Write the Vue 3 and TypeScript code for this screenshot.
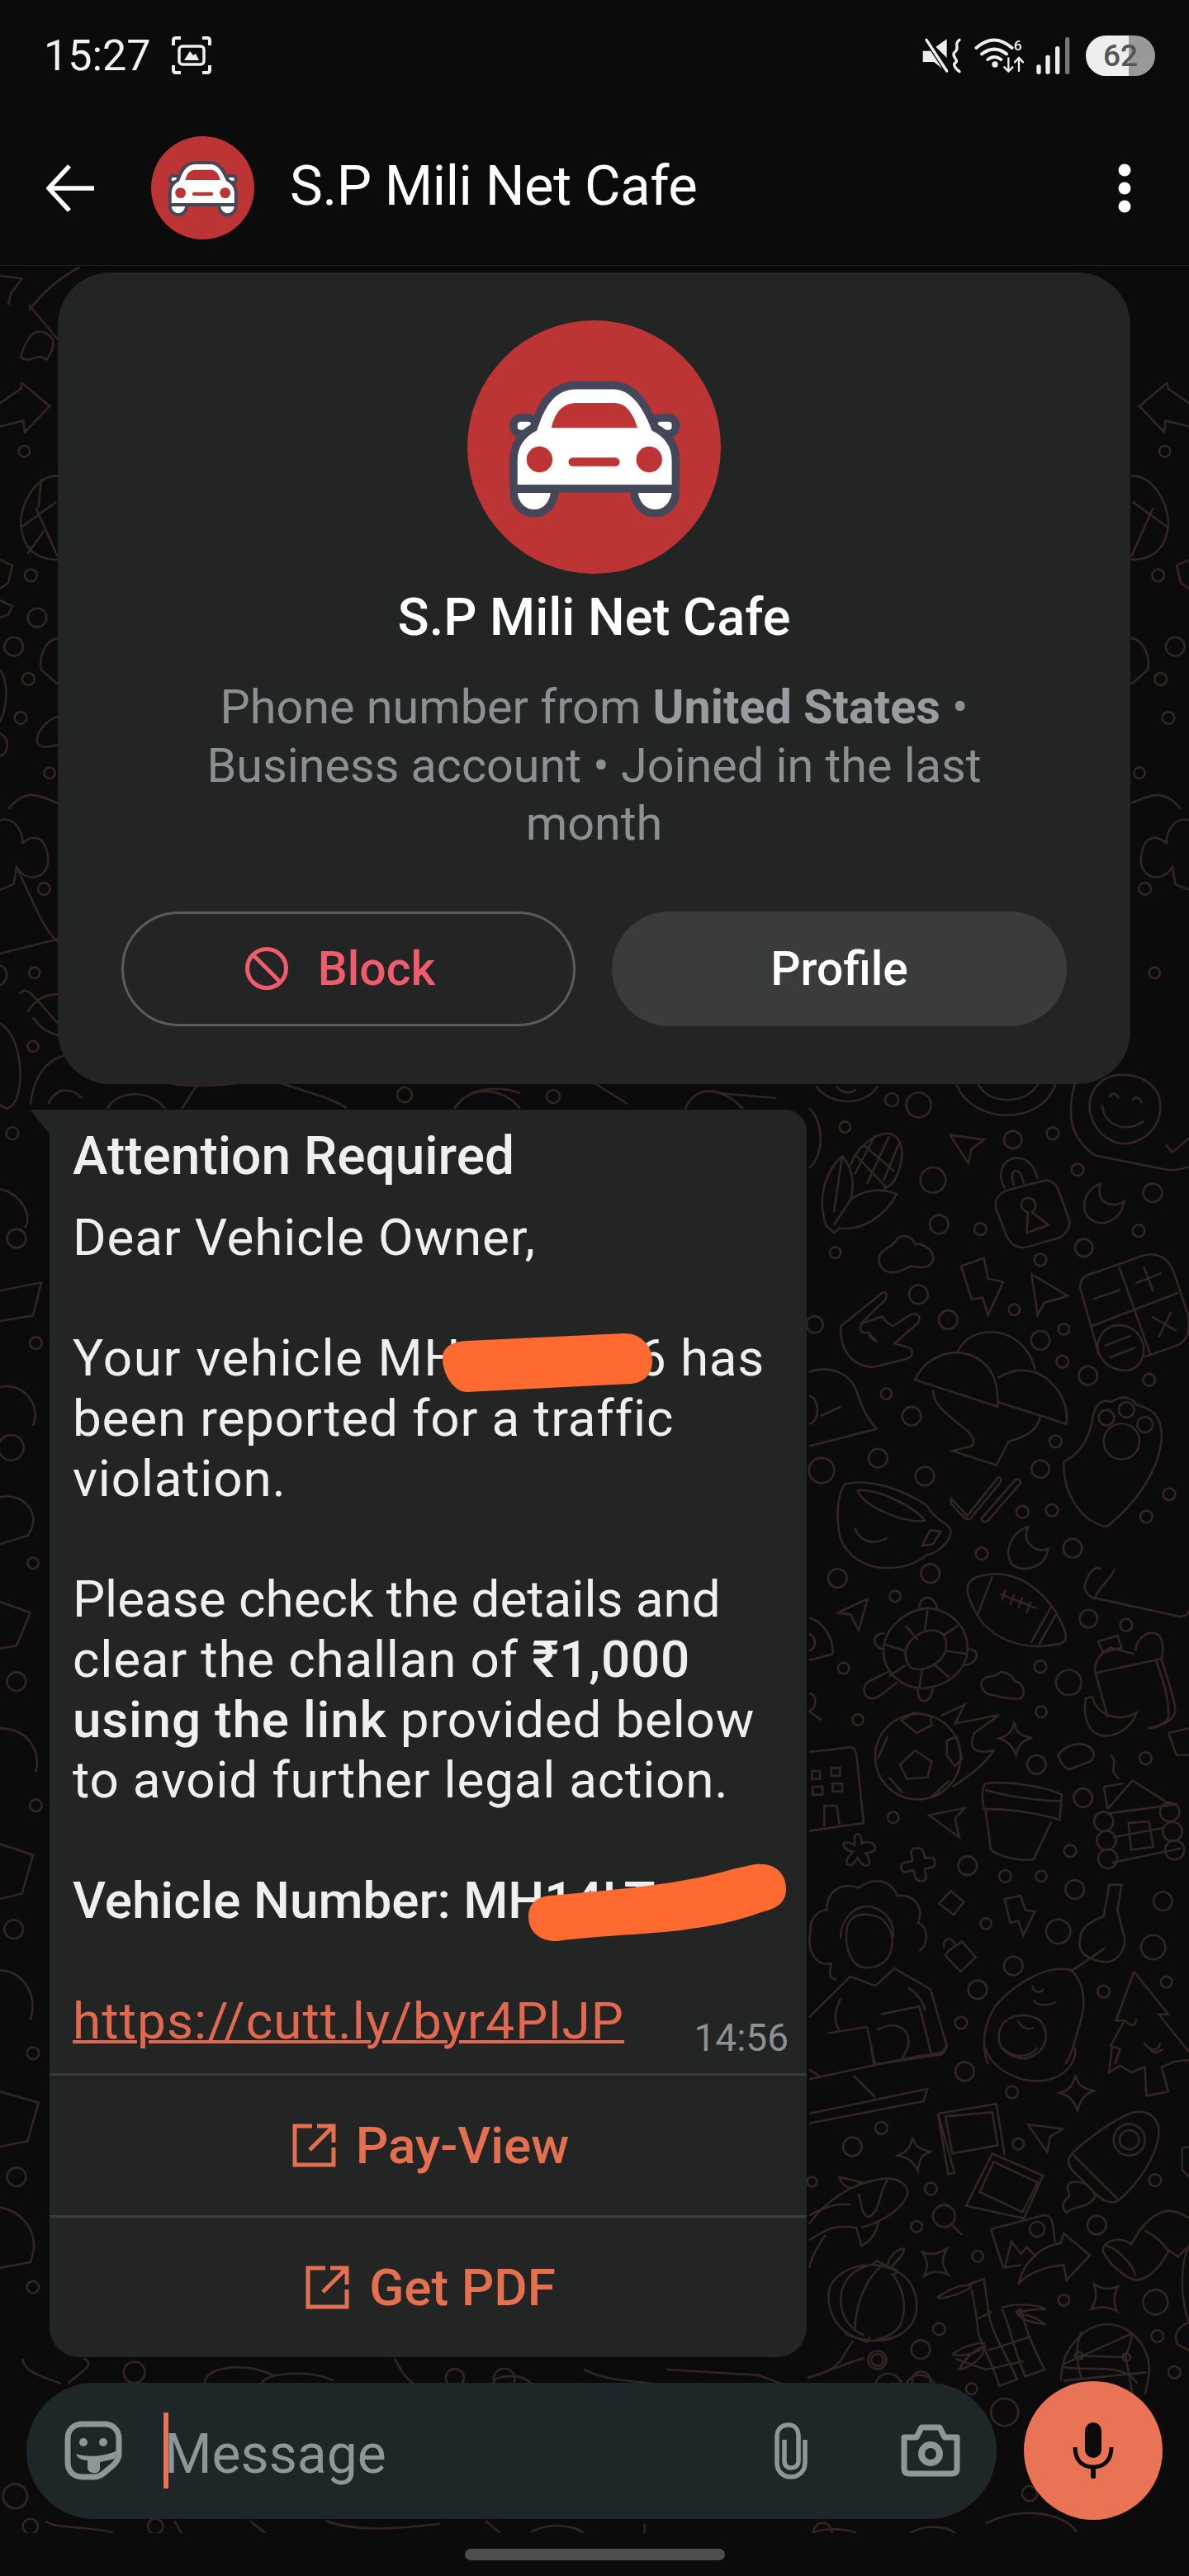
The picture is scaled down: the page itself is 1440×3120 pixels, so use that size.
<script setup lang="ts">
/**
 * Chat screen with an unknown business sender and the doodle wallpaper
 */

interface DoodleGroup {
  x: number
  y: number
  sx: number
  sy: number
  paths: string[]
  dots: [number, number, number][]
}

// each group is traced in the coordinates of its own crop, then scaled back to the page
const doodles: DoodleGroup[] = [
  {
    x: 980, y: 1300, sx: 1 / 3, sy: 1 / 2.613,
    dots: [[398,100,45],[130,170,20],[740,210,32],[885,190,22],[450,338,46],[975,305,22],[1248,378,34],[472,478,34],[622,493,22],[1197,498,22],[95,567,20],[840,590,22],[998,552,32],[397,700,34],[505,780,34],[745,748,20],[925,810,20],[840,845,34],[920,912,22],[20,795,30],[1013,957,34],[1235,970,22],[280,1014,20],[372,1085,34],[895,1165,22],[250,1218,34],[45,1257,46],[420,1275,34],[840,1252,32],[1308,1332,22],[775,1388,22],[882,1383,22],[1225,1403,22],[957,1503,34],[627,1520,22],[1080,1090,28],[1153,1065,28],[1220,1112,28],[1135,1165,65]],
    paths: [
      'M60 480 L90 505 L110 490 C190 500 280 450 318 382 C260 360 190 370 150 400 C170 340 150 290 120 262 C70 300 25 380 60 480Z',
      'M150 290 C170 240 230 190 290 190 C340 200 350 260 320 320 C310 345 290 360 270 365 M165 255 L280 360 M195 225 L310 310 M240 195 L165 320 M290 200 L210 350 M325 225 L270 340 M120 262 L90 440 M150 400 L90 480',
      'M512 195 L635 210 L590 240 L578 285Z',
      'M680 430 C670 400 690 380 720 370 L850 340 C880 335 900 350 910 380 L945 465 C950 490 930 510 910 520 L790 550 C750 555 730 540 715 510Z',
      'M712 365 C680 320 700 270 755 268 C800 268 820 300 830 335 M745 355 C730 320 740 305 755 310 C765 310 775 330 780 350',
      'M795 440 C760 430 765 395 795 395 C825 395 830 425 810 440 L870 480 L790 505Z',
      'M1058 350 C1000 365 980 430 1020 460 C1060 490 1130 470 1145 405 C1110 425 1040 420 1058 350Z',
      'M300 630 C260 630 240 590 265 565 C280 550 300 550 310 535 C330 505 370 510 385 540 C420 540 455 560 450 590 C440 620 400 615 370 610 C340 625 320 630 300 630Z',
      'M552 610 L635 585 L650 650 L705 660 L650 765 L630 710 L590 715Z',
      'M808 635 L940 705 L855 725 L830 765Z',
      'M985 680 C980 650 1010 635 1040 630 L1220 575 C1270 565 1310 590 1325 630 L1375 760 C1385 810 1380 840 1340 860 L1210 900 M1125 610 L1240 890 M1025 800 L1340 695 M1030 715 L1130 685 M1185 665 L1280 632 M1215 610 L1250 690 M1245 770 L1335 815 M1315 755 L1270 835 M985 680 L1040 850 C1055 920 1100 940 1150 940 C1190 940 1220 910 1215 860 C1200 810 1150 790 1100 800 C1060 815 1040 850 1050 890 M1075 862 L1170 830 M1090 900 L1185 868',
      'M115 800 C110 870 150 925 230 930 L350 905 C385 895 380 870 350 865 L310 855 L395 790 C410 765 390 755 365 765 L305 800 L285 790 L265 770 L195 790 C175 810 190 825 215 820 L245 850 L215 830 M115 800 L265 695 C290 685 285 715 260 730 L190 790',
      'M385 970 C420 900 510 870 580 890 C650 910 690 960 685 1055Z M540 880 C580 810 690 800 760 850 C800 880 815 910 820 940 M685 965 C740 930 830 930 880 980 C925 1020 940 1060 935 1110 L685 1040',
      'M450 1000 C450 1040 480 1065 530 1100 C590 1140 610 1160 590 1180 L520 1195 L680 1240 L725 1165 C790 1150 830 1130 840 1085',
      'M925 1230 C990 1200 1020 1150 1030 1090 C1040 1040 1070 1030 1100 1040 C1130 1020 1170 1020 1190 1050 C1240 1060 1285 1080 1280 1160 C1270 1260 1180 1370 1080 1435 C990 1420 920 1330 925 1230Z',
      'M130 1300 C220 1280 350 1320 430 1370 C460 1420 510 1420 515 1450 C510 1490 460 1520 425 1525 C380 1560 300 1575 230 1560 C150 1540 105 1490 105 1420 C100 1370 110 1320 130 1300Z',
      'M175 1320 C240 1310 380 1370 420 1415 C380 1430 200 1380 175 1320Z M165 1440 C190 1490 240 1490 285 1470 M440 1445 L478 1450 L450 1490 L410 1495Z',
      'M515 1345 L575 1400 L685 1280 C700 1275 700 1290 690 1300 L585 1410 C570 1420 540 1385 515 1360Z M630 1405 L750 1285 C765 1280 775 1295 760 1305 L650 1415 C630 1425 620 1415 630 1405Z',
      'M795 1435 C730 1450 700 1530 745 1560 C790 1580 860 1560 868 1505 C830 1520 770 1490 795 1435Z',
      'M1145 5 C1060 0 1010 60 1020 120 C1040 200 1120 240 1190 215 C1260 190 1290 130 1270 70 C1250 30 1200 5 1145 5Z M1065 100 C1070 170 1160 190 1215 150 M1090 75 C1100 60 1115 60 1125 80 M1175 85 C1185 70 1200 75 1210 95',
      'M970 20 C930 130 950 210 1040 260 L1300 305 C1340 310 1380 295 1380 295 M1295 225 L1320 250 L1380 205',
      'M25 40 C70 100 200 110 250 40 M100 40 C110 60 150 70 170 50 M535 35 C590 160 840 170 895 35 M615 35 C650 100 790 100 830 35 M0 110 C50 150 60 250 0 300',
      'M0 945 C60 925 140 940 170 1000 C190 1050 200 1080 245 1125 L0 1180 M0 1020 C40 1030 40 1100 0 1110 M40 1085 L115 1055',
    ],
  },
  {
    x: 980, y: 1900, sx: 1 / 3, sy: 1 / 2.613,
    dots: [[103,30,34],[440,15,34],[312,87,20],[1015,158,32],[1152,178,22],[125,315,20],[840,310,22],[943,360,46],[177,478,20],[843,453,20],[826,620,34],[1222,600,22],[305,787,20],[995,725,34],[575,940,34],[948,893,22],[712,973,22],[843,973,20],[965,1015,34],[1285,1052,34],[642,1123,20],[905,1148,44],[1250,1198,44],[742,1257,34],[612,1332,34],[1070,1338,22],[1298,1308,20],[552,1437,22],[395,595,155],[1070,800,35],[1080,860,35],[1085,918,35],[1310,770,35],[1320,832,35],[1328,890,35]],
    paths: [
      'M103 140 L212 95 L180 195 L150 145Z',
      'M270 260 C270 190 350 130 430 125 C520 130 580 190 575 260 C570 320 510 370 420 378 C340 380 270 330 270 260Z',
      'M350 270 C350 230 400 195 450 195 C490 195 505 225 495 260 C480 300 430 320 395 318 C365 320 350 295 350 270Z',
      'M350 180 L395 225 M430 130 L420 195 M540 180 L490 210 M495 260 L575 270 M450 300 L510 345 M410 320 L400 378 M350 305 L290 340 M350 260 L275 240',
      'M275 205 C230 200 220 250 275 255 M400 125 C400 80 460 80 465 130 M575 255 C620 250 625 300 560 305 M290 325 L210 360 C180 395 220 430 260 400 L320 360 M395 380 C390 430 440 435 450 378',
      'M575 70 C570 40 600 25 640 20 C760 0 880 80 930 200 C940 230 920 240 890 240 C770 260 650 220 600 130 C585 100 575 85 575 70Z',
      'M665 25 L610 150 M880 120 L805 235 M900 140 L835 240 M695 80 L825 125 M715 65 L700 100 M745 80 L730 115 M775 90 L760 125 M805 105 L790 140',
      'M670 400 C630 400 610 360 640 345 C660 340 680 340 690 330 C710 320 740 340 745 355 C775 360 790 390 770 410 C740 415 710 410 670 400Z',
      'M1040 330 L1280 285 C1300 350 1330 410 1330 450 C1325 480 1290 495 1240 505 M1260 290 C1280 340 1310 410 1305 470 C1300 490 1260 500 1230 505 M1040 330 C1030 290 1070 260 1095 250 L1180 270 M1050 230 L1120 212 L1135 250 L1068 265Z M1040 330 L1085 470',
      'M1185 260 C1190 215 1240 190 1270 210 C1290 230 1285 265 1280 285',
      'M1005 410 L1030 405 C1040 460 1120 490 1190 455 C1170 510 1090 545 1040 520 C1005 500 995 450 1005 410Z',
      'M330 620 L385 575 L445 610 L430 660 L355 665Z M335 480 L390 520 L445 495 L440 465 L380 455Z M500 545 L535 530 L555 600 L530 625 L500 590Z M250 600 L285 530 M290 660 L340 710 M440 725 L510 670',
      'M480 465 L565 430 L530 490 L690 463 L600 520 C580 560 590 590 670 575 C630 630 570 660 520 690',
      'M745 485 C750 520 770 530 810 535 C770 545 760 560 752 590 C740 560 720 545 690 537 C720 530 740 515 745 485Z',
      'M905 590 C930 555 1000 540 1030 575 C1040 590 1030 605 1020 610 L945 635 C925 630 910 610 905 590Z',
      'M1305 520 L1380 505 M1305 520 L1335 590 L1380 590 M1000 60 C1010 10 1040 -10 1060 0 M1000 60 C1010 85 1025 95 1050 95 L1340 150 C1370 155 1380 140 1380 130 M1040 90 C1050 60 1100 30 1110 0',
      'M0 580 L150 565 C165 565 170 580 172 590 L198 805 L0 830 M10 640 H40 V665 H10Z M80 630 H112 V655 H80Z M12 690 H48 V715 H12Z M85 680 H120 V705 H85Z M55 815 V750 H100 L110 810',
      'M0 155 C60 170 90 230 85 270 L0 290 M0 205 C25 215 30 250 0 260 M0 395 C30 395 30 440 0 450 L45 480',
      'M435 780 L565 758 L530 790 L545 850Z',
      'M640 680 C720 670 860 690 918 715 L910 795 C820 770 710 760 635 760 C625 720 630 690 640 680Z M640 700 C720 720 830 735 915 735 M640 760 L660 890 C700 915 770 925 815 920 L880 800',
      'M1085 760 L1175 670 L1310 745 M1070 690 L1140 680 M1070 690 L1085 760 M1080 775 L1340 745 M1105 850 L1290 820 M1100 930 L1350 885 M1160 805 L1235 800 L1250 880 L1170 890Z M1095 590 C1130 620 1080 630 1125 665',
      'M165 845 C175 835 195 840 190 870 C210 860 240 865 240 885 C235 900 215 900 205 900 C220 915 225 940 205 940 C190 940 185 925 175 915 C165 935 145 945 135 930 C135 915 150 905 160 895 C140 895 125 885 125 870 C135 860 155 870 165 875Z',
      'M370 895 C375 880 410 880 415 895 L420 915 L450 915 C460 925 460 945 445 945 L420 950 L425 980 C415 995 390 990 385 975 L380 955 L345 960 C330 955 330 935 345 930 L375 925Z',
      'M515 1020 L562 1055 L525 1095 L472 1060Z',
      'M710 1045 L768 1035 L785 1080 L820 1085 L778 1160 L760 1115 L730 1120Z',
      'M505 1210 L555 1180 L605 1230 L550 1275 L495 1225Z M490 1200 C480 1170 520 1160 530 1190',
      'M1090 1000 L1135 1000 L1120 1080 L1140 1150 C1160 1190 1130 1240 1080 1245 C1020 1240 970 1220 985 1170 C985 1130 1040 1110 1070 1100Z',
      'M950 1270 C860 1250 740 1320 680 1380 C640 1430 620 1500 650 1568 M950 1270 C1000 1310 1010 1370 980 1450 C960 1510 950 1545 930 1568 M950 1275 L1060 1210 M975 1260 L1075 1200',
      'M690 1470 C700 1410 790 1400 840 1430 C880 1480 860 1530 790 1550 C730 1550 680 1520 690 1470Z M810 1320 C820 1350 850 1340 850 1330 M815 1365 C830 1390 890 1380 895 1370 M760 1430 C770 1460 810 1460 815 1450',
      'M1180 1275 L1305 1410 L1270 1410 L1380 1530 M1180 1275 L1115 1430 L1145 1430 L1095 1510 L1130 1520 L1110 1568 M1150 1430 C1165 1450 1185 1450 1190 1425 M1215 1500 C1240 1530 1270 1530 1275 1500',
      'M100 1300 C60 1300 80 1260 80 1250 C20 1260 -10 1200 5 1150 C0 1100 40 1080 65 1080 C60 1020 120 990 180 1010 C240 970 300 990 320 1035 C380 1030 420 1070 395 1120 C440 1140 430 1190 400 1210',
      'M135 1150 C140 1100 180 1090 220 1095 C280 1100 310 1150 300 1200 C290 1250 240 1265 200 1262 C160 1260 130 1210 135 1150Z M115 1170 C110 1120 160 1060 225 1070 C280 1080 310 1120 305 1165',
      'M0 1420 L150 1290 L240 1320 L310 1265 L440 1330 L500 1510 C495 1530 480 1540 460 1540 L240 1568 M210 1450 L70 1470 M210 1450 L240 1568 M260 1410 L400 1385 L445 1540 M245 1460 C310 1430 370 1450 360 1510 L340 1550 M115 1360 C90 1400 90 1440 110 1460 M360 1325 C400 1350 420 1380 420 1400',
    ],
  },
  {
    x: 980, y: 2480, sx: 1 / 3, sy: 1 / 3,
    dots: [[565,87,34],[737,162,22],[262,292,22],[157,360,34],[760,350,20],[1257,482,22],[442,513,22],[390,650,20],[1045,645,34],[612,758,20],[925,918,20],[1258,925,45],[472,1023,22],[405,1097,34],[248,1135,22],[1265,1048,22],[1327,1180,22],[590,1240,20],[10,487,18],[1163,335,57],[1163,335,35],[490,612,40],[828,660,27],[980,1120,14],[1152,1125,14]],
    paths: [
      'M640 0 C660 70 750 130 850 120 C930 110 975 50 965 0 M700 0 C740 40 800 40 830 0',
      'M1100 0 L1090 90 L1130 65 L1170 90 L1220 70 L1225 175 L1305 160 L1280 70 L1330 50 L1380 45 M1240 10 C1250 20 1270 20 1285 5',
      'M968 100 C975 135 995 150 1035 157 C1000 170 985 190 975 228 C960 190 945 175 910 165 C945 155 960 135 968 100Z',
      'M0 115 L230 65 L400 30 C460 25 490 20 495 0 M225 0 L235 60 M160 100 L240 180 M0 240 L430 150 L415 195 L0 275 M0 80 L40 105',
      'M375 325 C385 360 400 370 445 378 C410 385 400 405 395 448 C375 410 360 400 322 392 C355 380 370 360 375 325Z',
      'M468 240 L680 205 L710 390 M528 455 L505 460 L468 240Z M495 250 L665 235 L685 355 L520 385Z',
      'M665 385 L850 465 L780 620 L570 575Z M670 415 L830 490 L775 598 L620 525Z',
      'M795 280 L920 295 L875 325 L865 380Z',
      'M945 400 C960 370 1100 260 1180 235 C1240 225 1275 260 1270 320 C1260 400 1190 500 1125 555 C1100 570 1070 560 1040 530 L960 450 C940 430 940 410 945 400Z M960 390 L1125 555',
      'M1040 540 C1020 500 990 480 950 490 C925 510 950 530 945 540 C920 560 915 580 935 600 C960 570 1010 590 1040 540Z',
      'M0 640 C60 560 150 490 280 475 C340 475 365 510 355 540 C330 590 270 630 190 655 M110 470 L190 490 L160 510 C130 510 115 490 110 470Z M285 480 C250 530 260 600 215 615 C190 610 190 570 180 530 M170 650 L190 720 C230 700 250 660 250 630 M0 610 C50 580 100 565 150 570 M0 700 C60 660 100 640 170 655 M0 800 C10 760 30 720 60 680',
      'M520 645 L555 680',
      'M408 740 C440 760 470 750 500 730 C480 770 480 790 505 825 C470 810 450 810 418 830 C435 795 430 770 408 740Z',
      'M660 660 L850 610 C870 605 880 620 885 640 L893 710 M705 800 L660 660 M710 800 L735 705 L770 750 L790 725 L825 760 M705 800 L770 790',
      'M760 860 C780 770 850 720 915 710 L925 675 L1020 755 L935 845 L925 790 C860 795 790 820 760 860Z',
      'M1065 735 C1080 690 1140 690 1170 715 C1190 680 1220 620 1290 595 C1320 590 1350 600 1380 620 M1065 735 C1090 790 1150 840 1190 845 C1240 840 1280 790 1305 740 C1280 700 1250 680 1220 665 M1080 720 C1120 730 1180 790 1185 830 M1305 735 L1340 760 L1380 720',
      'M1035 860 C1070 880 1090 880 1122 868 C1105 900 1105 925 1118 958 C1085 940 1060 940 1025 950 C1045 920 1045 895 1035 860Z',
      'M70 900 C70 840 140 785 240 790 C340 800 395 860 390 950 C385 1020 320 1065 240 1065 C130 1065 70 990 70 900Z M240 785 C150 800 110 860 115 930 C120 990 160 1030 200 1045 M260 795 C210 840 170 920 165 1030 M300 820 C340 870 360 940 330 1010 C310 1040 270 1060 240 1060 M235 785 L245 775 L320 810 L310 825 M285 790 C290 760 320 730 345 730 C345 750 320 775 300 795 M130 1040 L210 1070 L220 1050 M160 1065 L130 1110 C110 1160 50 1190 0 1195',
      'M465 910 C500 880 550 860 590 865 M470 912 C520 905 560 890 590 870 M580 860 L635 840 L655 980 C670 1050 720 1120 755 1205 L690 1230 C680 1180 640 1110 615 1040 C610 990 600 930 590 880 M612 985 L665 960 M700 950 C730 1010 730 1060 785 1195 L855 1170 C820 1100 790 1040 770 950 L750 960 M650 1100 L805 1050 M700 945 C760 925 830 935 860 950 C810 950 780 960 750 960 M755 965 C790 970 830 980 855 1005 C810 1000 770 990 755 965Z M520 1115 C560 1085 610 1070 640 1075 M545 1170 C570 1120 610 1090 640 1085 C630 1130 590 1160 545 1170Z M520 1115 C560 1125 610 1110 640 1085',
      'M915 1210 C915 1090 1000 1010 1080 1005 C1170 1005 1240 1090 1235 1180 C1232 1210 1225 1240 1220 1260 M990 1030 C970 1080 965 1130 990 1200 M1170 1040 C1180 1060 1150 1110 1150 1125 L1175 1260 M925 1150 L1170 1040 M925 1210 L1225 1180 M980 1120 L1150 1125',
      'M240 1220 C260 1170 320 1175 335 1220 M355 1220 C370 1180 430 1180 455 1220',
      'M1380 360 L1355 365 V445 L1380 470 M1380 720 C1350 780 1345 900 1380 1000 C1340 1010 1320 1050 1340 1080 L1380 1100',
    ],
  },
  {
    x: 0, y: 320, sx: 1 / 3, sy: 1 / 1.425,
    dots: [[88,323,20],[112,537,22],[135,610,34],[50,660,34],[103,716,22],[75,783,22],[180,878,20],[160,1078,22],[125,1223,20],[120,1350,20],[45,1500,22]],
    paths: [
      'M0 240 L75 215 L80 205 L180 245 L90 290 L85 270 L0 280 M75 160 C100 120 130 110 170 120 C210 130 190 150 170 165 C130 150 110 175 75 160Z',
      'M105 80 C170 40 230 20 290 5 M105 70 L210 130 M0 20 L80 25 L40 50 L30 70',
      'M210 365 C130 365 80 410 75 445 C80 490 130 510 210 510 M75 455 L205 410 M130 420 L210 505 M150 370 L140 420 M160 460 L100 500',
      'M210 645 C160 650 140 680 150 700 L210 725 M210 780 C160 790 130 810 135 825 C150 840 190 830 210 830 M0 510 L45 520 L30 550 L0 560 M0 580 L45 590 L30 605 L0 610',
      'M30 940 C100 900 150 920 210 930 M0 960 C60 950 90 990 80 1000 C130 980 170 990 175 1030 C170 1060 100 1070 60 1040 L50 1070 L0 1080 M60 1040 C120 1100 160 1150 210 1170 M0 1190 L210 1165',
      'M70 1260 C100 1240 130 1270 210 1310 M100 1290 C130 1270 160 1260 210 1260 M120 1300 C160 1330 230 1340 290 1320 M0 1310 C70 1330 90 1400 60 1440 C40 1460 20 1460 0 1450 M110 1450 C130 1380 210 1360 290 1365 M175 1450 C200 1420 260 1420 300 1440',
      'M0 700 C30 720 30 760 0 790 M0 810 C30 815 40 840 0 850 M0 1210 C30 1215 35 1235 0 1245',
    ],
  },
  {
    // right of the profile card
    x: 1440, y: 320, sx: -1 / 3, sy: 1 / 1.425,
    dots: [[88,323,20],[112,537,22],[50,660,34],[103,716,22],[75,783,22],[180,878,20],[160,1078,22],[125,1223,20]],
    paths: [
      'M0 240 L75 215 L80 205 L180 245 L90 290 L85 270 L0 280',
      'M210 365 C130 365 80 410 75 445 C80 490 130 510 210 510 M75 455 L205 410 M130 420 L210 505',
      'M210 645 C160 650 140 680 150 700 L210 725 M0 510 L45 520 L30 550 L0 560',
      'M30 940 C100 900 150 920 210 930 M0 960 C60 950 90 990 80 1000 C130 980 170 990 175 1030 C170 1060 100 1070 60 1040 L50 1070 L0 1080',
    ],
  },
  {
    // left of the bubble
    x: 0, y: 1420, sx: 1 / 3, sy: 1 / 3,
    dots: [[60,240,34],[130,620,22],[40,1000,46],[120,1420,20],[60,1850,34],[130,2300,22],[50,2750,34],[120,3200,22],[60,3650,34],[120,4050,22]],
    paths: [
      'M0 60 C80 80 120 160 90 200 M0 430 L150 400 L120 520 L0 540 M0 780 C90 760 150 850 120 920 M0 1180 C80 1160 160 1240 100 1320 L0 1350',
      'M0 1560 L110 1600 L60 1720 L0 1730 M0 2020 C100 2020 150 2100 130 2180 M0 2440 L120 2480 L80 2620 L0 2640 M0 2900 C90 2900 140 3000 110 3080',
      'M0 3340 L140 3380 L100 3520 L0 3540 M0 3760 C90 3780 150 3860 110 3960 L0 3980',
    ],
  },
  {
    // strips above the bubble and round the composer
    x: 0, y: 2840, sx: 1 / 1.089, sy: 1 / 3,
    dots: [[177,100,14],[600,120,12],[1157,55,12],[1215,130,12],[1325,245,18],[1358,540,10],[20,550,16],[205,660,10],[1085,680,12],[40,660,10],[665,125,14]],
    paths: [
      'M30 50 C30 100 60 120 80 140 M110 50 C130 70 100 110 90 140 M270 140 C270 80 320 60 360 110 M345 140 C350 100 410 90 440 130 M520 50 C530 90 530 110 545 140 M650 140 C650 110 690 100 700 140',
      'M770 90 C800 130 830 130 860 140 M880 90 L1000 110 L1030 140 M1065 120 C1100 90 1130 50 1140 50 M1260 50 L1300 90 L1350 60 M1400 80 C1440 100 1480 60 1500 140',
      'M60 640 C70 670 130 660 150 685 M230 640 L240 685 M330 640 L350 685 M430 640 C470 680 520 670 580 650 M640 640 L660 685 M700 680 C730 640 760 660 770 685 M850 650 V685 M1070 685 C1090 660 1120 670 1130 685 M1200 685 C1220 650 1250 660 1260 685 M1300 650 C1340 590 1400 600 1420 680',
    ],
  },
  {
    x: 70, y: 1312, sx: 1, sy: 1,
    dots: [[420,14,9],[1010,20,8],[600,16,8]],
    paths: [
      'M60 31 C70 10 110 5 130 31 M170 0 L150 31 M270 0 C300 10 340 20 350 31 M480 31 C500 0 540 5 560 31 M650 0 L690 25 M760 31 C770 5 800 0 830 31',
      'M120 -2 C150 4 190 4 230 -2 M500 12 C520 5 540 5 560 12 M800 12 L870 18',
    ],
  },
]

function groupTransform(group: DoodleGroup) {
  return `translate(${group.x} ${group.y}) scale(${group.sx} ${group.sy})`
}
</script>

<template>
  <div class="phone">
    <header class="topbar">
      <div class="status">
        <div class="status__left">
          <span class="status__time">15:27</span>
          <svg class="status__shot" width="50" height="48" viewBox="0 0 50 48" fill="none" stroke="#eee" stroke-width="4">
            <path d="M3 12 V6 C3 4 4 3 6 3 H12 M38 3 H44 C46 3 47 4 47 6 V12 M47 36 V42 C47 44 46 45 44 45 H38 M12 45 H6 C4 45 3 44 3 42 V36" />
            <rect x="10" y="13" width="30" height="22" rx="4" stroke-width="3.5" />
            <path d="M16 30 L23 19 L27 24 L30 22 L34 30Z" fill="#eee" stroke="none" />
          </svg>
        </div>
        <div class="status__right">
          <svg width="50" height="45" viewBox="120 75 150 135">
            <path d="M125 125 H155 L212 185 V202 L165 165 H125Z M172 110 L212 82 V150Z" fill="#eee" />
            <path d="M138 85 L212 198" stroke="#0b0b0b" stroke-width="18" />
            <path d="M138 85 L212 198" stroke="#eee" stroke-width="10" stroke-linecap="round" />
            <path d="M258 85 C235 100 262 115 240 130 C225 145 262 160 240 170 C235 180 250 195 258 200" fill="none" stroke="#eee" stroke-width="10" stroke-linecap="round" />
          </svg>
          <svg width="62" height="50" viewBox="300 70 186 150" fill="none" stroke="#eee" stroke-width="12" stroke-linecap="round">
            <path d="M310 118 C355 80 395 80 440 118 M330 140 C360 118 392 118 420 140 M352 160 C368 148 384 148 400 160" />
            <circle cx="378" cy="178" r="11" fill="#eee" stroke="none" />
            <path d="M427 155 V202 M412 188 L427 204 L442 188 M465 202 V155 M450 170 L465 154 L480 170" stroke-width="7" />
            <text x="446" y="128" class="status__six">6</text>
          </svg>
          <svg width="44" height="46" viewBox="526 72 132 138">
            <rect x="530" y="175" width="16" height="35" rx="8" fill="#eee" />
            <rect x="563" y="140" width="16" height="70" rx="8" fill="#eee" />
            <rect x="598" y="108" width="16" height="102" rx="8" fill="#eee" />
            <rect x="634" y="75" width="16" height="135" rx="8" fill="#777" />
          </svg>
          <div class="battery">62</div>
        </div>
      </div>
      <div class="appbar">
        <svg width="58" height="58" viewBox="0 0 58 58" fill="none" stroke="#fff" stroke-width="5.5">
          <path d="M58 29 H6 M28 2 L3 29 L28 56" />
        </svg>
        <svg class="appbar__avatar" width="125" height="125" viewBox="198 82 920 920"><use href="#car" /></svg>
        <span class="appbar__title">S.P Mili Net Cafe</span>
        <svg class="appbar__menu" width="16" height="60" viewBox="0 0 16 60" fill="#fff">
          <circle cx="8" cy="8" r="7.5" />
          <circle cx="8" cy="30" r="7.5" />
          <circle cx="8" cy="52" r="7.5" />
        </svg>
      </div>
    </header>

    <main class="chat">
      <svg class="wallpaper" width="1440" height="2746" viewBox="0 322 1440 2746" fill="none" stroke="#332523" stroke-width="2.6">
        <g v-for="(group, i) in doodles" :key="i" :transform="groupTransform(group)">
          <path v-for="(d, j) in group.paths" :key="j" :d="d" vector-effect="non-scaling-stroke" />
          <ellipse v-for="(dot, j) in group.dots" :key="'d' + j" :cx="dot[0]" :cy="dot[1]" :rx="dot[2]"
            :ry="dot[2] * Math.abs(group.sx / group.sy)" vector-effect="non-scaling-stroke" />
        </g>
      </svg>

      <section class="card">
        <svg class="card__avatar" width="307" height="307" viewBox="198 82 920 920">
          <defs>
            <g id="car">
              <circle cx="658" cy="542" r="460" fill="#bc3434" />
              <g stroke="#44465a" stroke-width="58" paint-order="stroke" stroke-linejoin="round" fill="#fff">
                <rect x="380" y="450" width="50" height="30" rx="12" />
                <rect x="888" y="450" width="52" height="30" rx="12" />
                <path d="M380 708 H500 C496 745 470 768 440 768 C410 768 384 745 380 708Z" />
                <path d="M818 708 H940 C935 745 910 768 880 768 C850 768 822 745 818 708Z" />
                <path d="M380 678 V590 C380 540 405 505 450 482 C475 410 505 335 590 332 H730 C800 335 840 410 868 482 C915 505 940 540 940 590 V678Z" />
              </g>
              <path d="M503 472 C515 420 540 385 590 382 H735 C775 385 800 420 815 472Z" fill="#bc3434" />
              <circle cx="460" cy="587" r="47" fill="#bc3434" />
              <circle cx="858" cy="587" r="47" fill="#bc3434" />
              <rect x="565" y="580" width="186" height="32" rx="16" fill="#bc3434" />
            </g>
          </defs>
          <use href="#car" />
        </svg>
        <h1 class="card__name">S.P Mili Net Cafe</h1>
        <p class="card__desc">
          Phone number from <b>United States</b> •<br />
          Business account • Joined in the last<br />
          month
        </p>
        <div class="card__actions">
          <button class="pill pill--block">
            <svg width="52" height="52" viewBox="0 0 52 52" fill="none" stroke="currentColor" stroke-width="5">
              <circle cx="26" cy="26" r="23.5" />
              <path d="M10 10 L42 42" />
            </svg>
            Block
          </button>
          <button class="pill pill--profile">Profile</button>
        </div>
      </section>

      <article class="bubble">
        <div class="bubble__body">
          <h2 class="bubble__title">Attention Required</h2>
          <p>Dear Vehicle Owner,</p>
          <p><span class="plate-lead">Your vehicle MH</span><span class="hidden-gap"></span>6 has<br />been reported for a traffic<br />violation.</p>
          <p><span class="tight">Please check the details and</span><br />clear the challan of <b>₹1,000<br />using the link</b> provided below<br />to avoid further legal action.</p>
          <p><b class="tight">Vehicle Number: MH14LT</b></p>
          <div class="bubble__foot">
            <a class="bubble__link">https://cutt.ly/byr4PlJP</a>
            <span class="bubble__time">14:56</span>
          </div>
        </div>
        <button class="bubble__action">
          <svg width="53" height="53" viewBox="0 0 53 53" fill="none" stroke="currentColor" stroke-width="5">
            <path d="M24 3 H3 V50 H50 V29 M30 3 H50 V23 M50 3 L21 32" />
          </svg>
          Pay-View
        </button>
        <button class="bubble__action">
          <svg width="53" height="53" viewBox="0 0 53 53" fill="none" stroke="currentColor" stroke-width="5">
            <path d="M24 3 H3 V50 H50 V29 M30 3 H50 V23 M50 3 L21 32" />
          </svg>
          Get PDF
        </button>
      </article>

      <div class="composer">
        <div class="composer__bar">
          <svg class="composer__sticker" width="70" height="72" viewBox="0 0 70 72" fill="none" stroke="#8d9699" stroke-width="7">
            <path d="M22 4 H48 C59 4 66 11 66 22 V40 C66 46 63 50 59 54 L47 64 C43 67 40 68 36 68 H22 C11 68 4 61 4 50 V22 C4 11 11 4 22 4Z" />
            <circle cx="23" cy="26" r="5" fill="#8d9699" stroke="none" />
            <circle cx="47" cy="26" r="5" fill="#8d9699" stroke="none" />
            <path d="M14 40 C28 45 50 43 64 36 L61 46 L43 50 V58 C43 65 30 65 28 58 V48 C22 48 16 46 14 40Z" fill="#8d9699" stroke="none" />
          </svg>
          <span class="composer__caret"></span>
          <span class="composer__hint">Message</span>
          <svg class="composer__clip" width="46" height="70" viewBox="0 0 46 70" fill="none" stroke="#8d9699" stroke-width="5.5">
            <path d="M40 22 V50 C40 60 32 67 23 67 C13 67 6 60 6 50 V18 C6 9 12 4 20 4 C28 4 32 10 32 18 V48 C32 53 28 56 23 56 C18 56 15 53 15 48 V22" />
          </svg>
          <svg width="72" height="64" viewBox="0 0 72 64" fill="none" stroke="#8d9699" stroke-width="7" stroke-linejoin="round">
            <path d="M4 16 H19 L25 4 H47 L53 16 H68 V54 C68 58 66 60 62 60 H10 C6 60 4 58 4 54Z" />
            <circle cx="36" cy="36" r="11" stroke-width="8" />
          </svg>
        </div>
        <button class="composer__mic">
          <svg width="50" height="68" viewBox="0 0 50 68" fill="#0b0b0b">
            <rect x="15" y="0" width="20" height="43" rx="10" />
            <path d="M3 30 C3 48 14 54 25 54 C36 54 47 48 47 30" fill="none" stroke="#0b0b0b" stroke-width="5" />
            <rect x="22" y="52" width="6" height="16" rx="2" />
          </svg>
        </button>
      </div>
    </main>

    <footer class="navbar"><span class="navbar__pill"></span></footer>

    <!-- marker strokes drawn over the plate numbers -->
    <svg class="marker" width="1440" height="3120" viewBox="0 0 1440 3120" fill="#ff6a30">
      <path d="M536 1645 C536 1630 550 1625 565 1624 L755 1615 C775 1614 790 1630 790 1648 C790 1665 780 1674 765 1676 L565 1686 C550 1686 536 1665 536 1645Z" />
      <path d="M640 2322 C640 2305 650 2298 665 2296 C730 2290 790 2285 836 2276 C870 2270 890 2262 915 2258 C940 2256 952 2270 952 2288 C952 2305 940 2312 922 2316 C890 2328 860 2333 824 2338 C780 2343 720 2345 675 2351 C655 2352 640 2340 640 2322Z" />
    </svg>
  </div>
</template>

<style scoped>
.phone {
  position: relative;
  display: flex;
  flex-direction: column;
  width: 1440px;
  height: 3120px;
  overflow: hidden;
  background: #0b0b0b;
  color: #fff;
  font-family: Roboto, "Noto Sans", sans-serif;
}

.topbar {
  height: 322px;
  border-bottom: 1px solid #1d1d1d;
  box-sizing: border-box;
}

.status {
  display: flex;
  align-items: center;
  justify-content: space-between;
  height: 134px;
  padding: 0 41px 0 53px;
}

.status__left {
  display: flex;
  align-items: center;
  gap: 24px;
}

.status__time {
  font-size: 52px;
  color: #f2f2f2;
}

.status__right {
  display: flex;
  align-items: center;
  gap: 13px;
}

.status__six {
  font-size: 52px;
  font-weight: 500;
  fill: #eee;
  stroke: none;
}

.battery {
  width: 84px;
  height: 49px;
  margin-left: 4px;
  border-radius: 25px;
  background: linear-gradient(90deg, #eee 62%, #999 62%);
  color: #555;
  font-size: 37px;
  font-weight: 500;
  line-height: 49px;
  text-align: center;
}

.appbar {
  display: flex;
  align-items: center;
  height: 187px;
  padding: 0 70px 0 56px;
}

.appbar__avatar {
  margin-left: 69px;
}

.appbar__title {
  margin-left: 43px;
  padding-bottom: 5px;
  font-size: 67px;
  letter-spacing: -0.4px;
}

.appbar__menu {
  margin-left: auto;
}

.chat {
  position: relative;
  display: flex;
  flex-direction: column;
  height: 2746px;
  padding-top: 8px;
  box-sizing: border-box;
}

.wallpaper {
  position: absolute;
  top: 0;
  left: 0;
}

.card {
  position: relative;
  display: flex;
  flex-direction: column;
  align-items: center;
  width: 1299px;
  margin-left: 70px;
  padding: 58px 76px 70px;
  box-sizing: border-box;
  border-radius: 64px;
  background: #232525;
}

.card__name {
  margin: 18px 0 0;
  font-size: 63px;
  font-weight: 500;
  line-height: 70px;
}

.card__desc {
  margin: 39px 0 0;
  color: #8b9193;
  font-size: 57.5px;
  line-height: 70.5px;
  text-align: center;
}

.card__desc b {
  font-weight: 700;
  color: #989d9f;
}

.card__actions {
  display: grid;
  grid-template-columns: 550px 551px;
  gap: 44px;
  margin-top: 70px;
}

.pill {
  display: flex;
  align-items: center;
  justify-content: center;
  gap: 36px;
  height: 139px;
  padding: 0;
  box-sizing: border-box;
  border-radius: 70px;
  font-family: inherit;
  font-size: 57px;
  font-weight: 500;
}

.pill--block {
  border: 3px solid #5a5c5c;
  background: transparent;
  color: #f15c6d;
}

.pill--block svg {
  margin-left: -20px;
}

.pill--profile {
  border: none;
  background: #3a3c3c;
  color: #fff;
}

.bubble {
  position: relative;
  width: 917px;
  margin: 31px 0 0 60px;
  border-radius: 0 26px 36px 36px;
  background: #232525;
}

.bubble::before {
  content: "";
  position: absolute;
  top: 0;
  left: -24px;
  width: 24px;
  height: 30px;
  background: #232525;
  clip-path: polygon(0 0, 100% 0, 100% 100%);
}

.bubble__body {
  padding: 20px 22px 27px 28px;
  color: #eef0f0;
  font-size: 62px;
  letter-spacing: 0.8px;
  line-height: 73px;
}

.bubble__body p {
  margin: 0 0 73px;
}

.bubble__body b {
  font-weight: 500;
}

.bubble__title {
  margin: 0 0 25px;
  font-size: 64px;
  font-weight: 500;
  letter-spacing: 0;
  line-height: 73px;
}

.tight {
  letter-spacing: 0;
}

.plate-lead {
  letter-spacing: 1.6px;
}

.hidden-gap {
  display: inline-block;
  width: 213px;
}

.bubble__foot {
  display: flex;
  align-items: flex-end;
  justify-content: space-between;
}

.bubble__link {
  color: #e2694f;
  letter-spacing: 1.1px;
  text-decoration: underline;
  text-decoration-thickness: 4px;
}

.bubble__time {
  margin-bottom: -14px;
  color: #8b9294;
  font-size: 46px;
  letter-spacing: 0;
  line-height: 60px;
}

.bubble__action {
  display: flex;
  align-items: center;
  justify-content: center;
  gap: 24px;
  width: 100%;
  height: 172px;
  padding: 0 0 0 6px;
  border: none;
  border-top: 3px solid #3a3c3c;
  background: transparent;
  color: #e5704f;
  font-family: inherit;
  font-size: 62px;
  font-weight: 500;
}

.composer {
  position: relative;
  display: flex;
  align-items: center;
  gap: 33px;
  margin-top: auto;
  padding: 0 32px 16px;
}

.composer__bar {
  display: flex;
  align-items: center;
  width: 1175px;
  height: 165px;
  padding: 0 44px 0 46px;
  box-sizing: border-box;
  border-radius: 83px;
  background: #1f2629;
}

.composer__caret {
  width: 6px;
  height: 92px;
  margin-left: 50px;
  background: #e87355;
}

.composer__hint {
  margin-left: -5px;
  padding-top: 8px;
  color: #8d9699;
  font-size: 66px;
}

.composer__clip {
  margin-left: auto;
  margin-right: 110px;
}

.composer__mic {
  display: flex;
  align-items: center;
  justify-content: center;
  width: 168px;
  height: 168px;
  padding: 0;
  border: none;
  border-radius: 50%;
  background: #e87355;
}

.navbar {
  display: flex;
  justify-content: center;
  height: 52px;
  padding-top: 19px;
  box-sizing: border-box;
}

.navbar__pill {
  width: 315px;
  height: 14px;
  border-radius: 7px;
  background: #4d4d4d;
}

.marker {
  position: absolute;
  top: 0;
  left: 0;
  pointer-events: none;
}
</style>

<style>
html,
body {
  margin: 0;
  background: #0b0b0b;
}
</style>
